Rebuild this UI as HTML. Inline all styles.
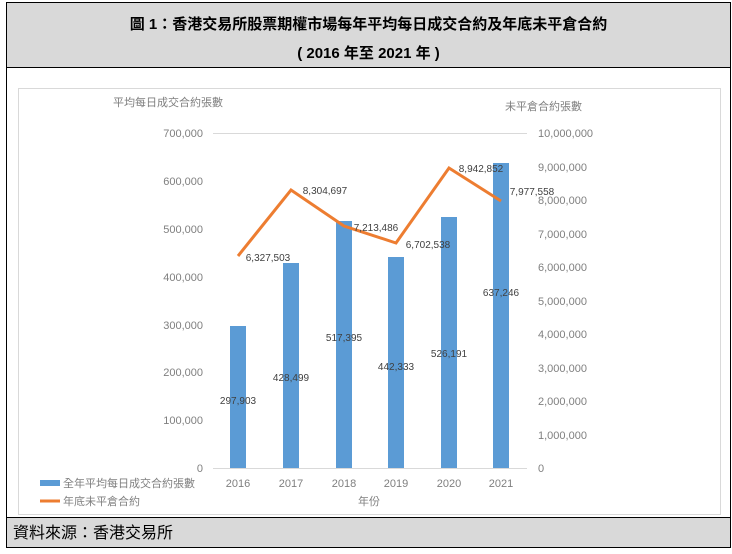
<!DOCTYPE html>
<html><head><meta charset="utf-8"><style>
body{margin:0;width:732px;height:554px;background:#fff;font-family:"Liberation Sans","Noto Sans CJK TC",sans-serif;position:relative;overflow:hidden}
.hdr{position:absolute;left:6px;top:2px;width:723px;height:64px;background:#d9d9d9;border:1px solid #000;text-align:center;font-weight:bold;font-size:15px;color:#000}
.body{position:absolute;left:6px;top:67px;width:723px;height:450px;border-left:1px solid #000;border-right:1px solid #000}
.ftr{position:absolute;left:6px;top:517px;width:723px;height:31px;background:#d9d9d9;border:1px solid #000;font-size:16px;line-height:31px;padding-left:6px;box-sizing:border-box;width:725px}
svg text{font-family:"Liberation Sans","Noto Sans CJK TC",sans-serif}
</style></head><body>
<div class="hdr"><div style="position:absolute;top:10px;width:100%">圖 1：香港交易所股票期權市場每年平均每日成交合約及年底未平倉合約</div><div style="position:absolute;top:39px;width:100%">( 2016 年至 2021 年 )</div></div>
<div class="body"></div>
<div class="ftr">資料來源：香港交易所</div>
<svg width="732" height="554" style="position:absolute;left:0;top:0">
<rect x="18.5" y="88.5" width="702" height="426" fill="none" stroke="#d9d9d9"/>
<g font-size="11" fill="#7f7f7f">
<text x="113" y="106">平均每日成交合約張數</text>
<text x="505" y="110">未平倉合約張數</text>
<g text-anchor="end">
<text x="203" y="137">700,000</text><text x="203" y="185">600,000</text><text x="203" y="233">500,000</text><text x="203" y="281">400,000</text><text x="203" y="329">300,000</text><text x="203" y="376">200,000</text><text x="203" y="424">100,000</text><text x="203" y="472">0</text>
</g>
<text x="538" y="137">10,000,000</text><text x="538" y="171">9,000,000</text><text x="538" y="204">8,000,000</text><text x="538" y="238">7,000,000</text><text x="538" y="271">6,000,000</text><text x="538" y="305">5,000,000</text><text x="538" y="338">4,000,000</text><text x="538" y="372">3,000,000</text><text x="538" y="405">2,000,000</text><text x="538" y="439">1,000,000</text><text x="538" y="472">0</text>
<g text-anchor="middle">
<text x="238" y="487">2016</text><text x="291" y="487">2017</text><text x="344" y="487">2018</text><text x="396" y="487">2019</text><text x="449" y="487">2020</text><text x="501" y="487">2021</text>
<text x="369" y="505">年份</text>
</g>
<text x="63" y="487">全年平均每日成交合約張數</text>
<text x="63" y="505">年底未平倉合約</text>
</g>
<line x1="213" y1="133.5" x2="527" y2="133.5" stroke="#d9d9d9"/>
<line x1="213" y1="468.5" x2="527" y2="468.5" stroke="#d9d9d9"/>
<g fill="#5b9bd5">
<rect x="230" y="326" width="16" height="142"/>
<rect x="283" y="263" width="16" height="205"/>
<rect x="336" y="221" width="16" height="247"/>
<rect x="388" y="257" width="16" height="211"/>
<rect x="441" y="217" width="16" height="251"/>
<rect x="493" y="163" width="16" height="305"/>
<rect x="40" y="480" width="20" height="6"/>
</g>
<polyline points="238,256 291,190 344,226 396,243 449,168 501,201" fill="none" stroke="#ed7d31" stroke-width="3"/>
<line x1="40" y1="501" x2="60" y2="501" stroke="#ed7d31" stroke-width="3"/>
<g font-size="10" fill="#404040" text-anchor="middle">
<text x="238" y="404">297,903</text><text x="291" y="381">428,499</text><text x="344" y="341">517,395</text><text x="396" y="370">442,333</text><text x="449" y="357">526,191</text><text x="501" y="296">637,246</text>
<text x="268" y="261">6,327,503</text><text x="325" y="194">8,304,697</text><text x="376" y="231">7,213,486</text><text x="428" y="248">6,702,538</text><text x="481" y="172">8,942,852</text><text x="532" y="195">7,977,558</text>
</g>
</svg>
</body></html>
